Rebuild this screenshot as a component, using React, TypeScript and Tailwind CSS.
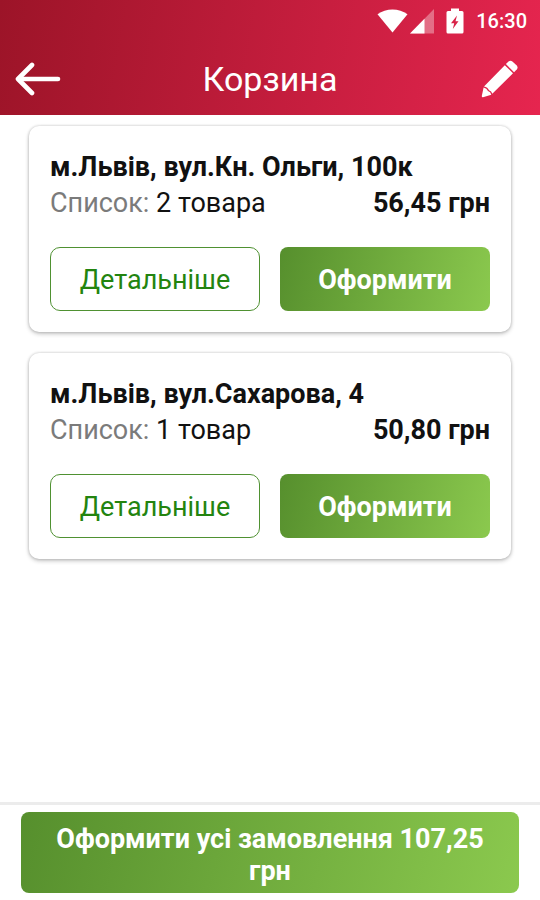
type Order = {
  address: string;
  items: string;
  price: string;
};

const orders: Order[] = [
  { address: "м.Львів, вул.Кн. Ольги, 100к", items: "2 товара", price: "56,45 грн" },
  { address: "м.Львів, вул.Сахарова, 4", items: "1 товар", price: "50,80 грн" },
];

function StatusBar() {
  return (
    <div className="flex h-[42px] items-center justify-end pr-[13px] text-white">
      <svg className="h-[24px] w-[31px]" viewBox="0 0 31 24" fill="currentColor" aria-hidden="true">
        <path d="M15.500 23.500 L0.500 5.200 C9 -1.200 22 -1.200 30.500 5.200 Z" />
      </svg>
      <svg className="ml-px h-[26px] w-[26px]" viewBox="0 0 26 26" fill="currentColor" aria-hidden="true">
        <path d="M1 25.500 L25 1 V25.500 Z" opacity="0.35" />
        <path d="M1 25.500 L15.500 10.700 V25.500 Z" />
      </svg>
      <svg className="ml-[11px] h-[26px] w-[18px]" viewBox="0 0 18 26" fill="currentColor" aria-hidden="true">
        <path
          fillRule="evenodd"
          d="M5 0.500 H13 V3 H16 Q17.500 3 17.500 4.500 V24 Q17.500 25.500 16 25.500 H2 Q0.500 25.500 0.500 24 V4.500 Q0.500 3 2 3 H5 Z M11 7.500 L5 15.300 H8.200 L6.800 21 L12.500 13.300 H9.500 Z"
        />
      </svg>
      <span className="ml-[12px] text-[20px] leading-[24px] font-medium">16:30</span>
    </div>
  );
}

function Header() {
  return (
    <header className="bg-[linear-gradient(100deg,#9c1428_0%,#e6254f_100%)] text-white">
      <StatusBar />
      <div className="grid h-[73px] grid-cols-[48px_1fr_48px] items-center px-[15px]">
        <button type="button" aria-label="Назад">
          <svg
            className="h-[36px] w-[46px]"
            viewBox="0 0 46 36"
            fill="none"
            stroke="currentColor"
            strokeWidth="4.600"
            strokeLinecap="round"
            strokeLinejoin="round"
            aria-hidden="true"
          >
            <path d="M17 4 L3 18 L17 32" />
            <path d="M4 18 H43" />
          </svg>
        </button>
        <h1 className="text-center text-[34px] leading-[40px]">Корзина</h1>
        <button type="button" aria-label="Редагувати" className="flex justify-start pl-[3px]">
          <svg className="h-[38px] w-[40px]" viewBox="0 0 40 38" fill="currentColor" aria-hidden="true">
            <path d="M4 26.500 L24.800 5.200 L33 13.300 L12.300 33.800 Q11.600 31 9 30.300 Q7.800 27.200 4 26.500 Z" />
            <path d="M3.600 27.500 Q6.800 28.200 8 31.100 Q10.600 31.900 11.300 34.700 L3 37.200 Q1.700 37.400 1.800 36 Z" />
            <path d="M25.900 4.100 L28.800 1.300 Q30.600 0 32.400 1.500 L36.800 5.600 Q38.200 7.400 36.900 9.300 L34.100 12.200 Z" />
          </svg>
        </button>
      </div>
    </header>
  );
}

function OrderCard({ address, items, price }: Order) {
  return (
    <article className="rounded-[10px] bg-white px-[21px] pt-[23px] pb-[21px] shadow-[0_0_3px_rgba(0,0,0,0.2),0_2px_4px_rgba(0,0,0,0.22)]">
      <h2 className="text-[27px] leading-[36px] font-bold">{address}</h2>
      <div className="flex justify-between text-[27px] leading-[36px]">
        <p>
          <span className="text-[#7b7b7b]">Список:</span> {items}
        </p>
        <p className="font-bold">{price}</p>
      </div>
      <div className="mt-[26px] grid grid-cols-2 gap-[20px]">
        <button
          type="button"
          className="h-[64px] rounded-[10px] border border-[#4f9132] pt-[2px] text-[27px] leading-[32px] text-[#23840f]"
        >
          Детальніше
        </button>
        <button
          type="button"
          className="h-[64px] rounded-[8px] bg-[linear-gradient(105deg,#568f2d_0%,#8bc94e_100%)] pt-[2px] text-[27px] leading-[32px] font-bold text-white"
        >
          Оформити
        </button>
      </div>
    </article>
  );
}

export default function App() {
  return (
    <div className="flex min-h-screen flex-col bg-white font-[Roboto,sans-serif] text-[#111111]">
      <Header />
      <main className="flex flex-1 flex-col gap-[21px] px-[29px] pt-[11px]">
        {orders.map((order) => (
          <OrderCard key={order.address} {...order} />
        ))}
      </main>
      <footer className="border-t-3 border-[#ececec] px-[21px] pt-[7px] pb-[7px]">
        <button
          type="button"
          className="w-full rounded-[8px] bg-[linear-gradient(105deg,#568f2d_0%,#8bc94e_100%)] px-[30px] pt-[11px] pb-[6px] text-[27px] leading-[32px] font-bold text-white"
        >
          Оформити усі замовлення 107,25 грн
        </button>
      </footer>
    </div>
  );
}
